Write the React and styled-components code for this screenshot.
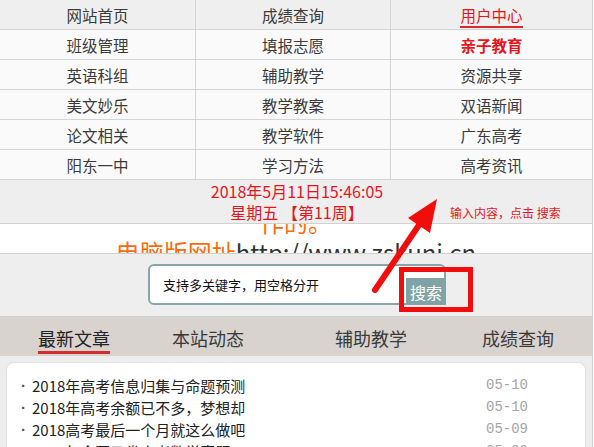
import React from "react";
import styled, { createGlobalStyle } from "styled-components";

const GlobalStyle = createGlobalStyle`
  body {
    margin: 0;
    background: #ffffff;
    font-family: "Noto Sans CJK SC", "Noto Sans", sans-serif;
  }
`;

const Page = styled.div`
  position: relative;
  width: 592px;
  border-right: 1px solid #cfcfcf;
  overflow: hidden;
`;

const NavGrid = styled.div`
  display: grid;
  grid-template-columns: 196px 195px 201px;
`;

const NavCell = styled.div`
  height: 29px;
  display: flex;
  align-items: center;
  justify-content: center;
  border-bottom: 1px solid #d4d4d4;
  border-right: ${(p) => (p.$last ? "none" : "1px solid #d4d4d4")};
  background: ${(p) => (p.$head ? "#efefef" : "#fafafa")};
  font-size: 15.5px;
  color: ${(p) => (p.$red ? "#e8141c" : "#3a3a3a")};
  font-weight: ${(p) => (p.$bold ? 700 : 400)};
`;

const ActiveLink = styled.span`
  line-height: 22px;
  border-bottom: 2px solid #d52c2c;
  margin-top: 2px;
`;

const DateBlock = styled.div`
  height: 43px;
  background: #eeeeee;
  display: flex;
  flex-direction: column;
  align-items: center;
  padding-left: 2px;
  color: #e8141c;
  font-size: 16px;
  line-height: 21px;
  box-sizing: border-box;
  padding-top: 1px;
`;

const Marquee = styled.div`
  height: 29px;
  background: #ffffff;
  border-top: 1px solid #d0d0d0;
  border-bottom: 1px solid #d0d0d0;
  overflow: hidden;
`;

const MarqueeInner = styled.div`
  margin-top: -17px;
  text-align: center;
  font-size: 24px;
  line-height: 30px;
  color: #ff6a0a;
`;

const UrlText = styled.span`
  color: #333333;
`;

const SearchArea = styled.div`
  height: 63px;
  background: #eeeeee;
  border-bottom: 1px solid #d0d0d0;
  display: flex;
  padding-left: 148px;
  padding-top: 10px;
  box-sizing: border-box;
`;

const SearchBox = styled.div`
  width: 298px;
  height: 41px;
  box-sizing: border-box;
  border: 2px solid #86a7ab;
  border-radius: 6px;
  background: #ffffff;
  display: flex;
  align-items: flex-end;
  justify-content: space-between;
`;

const SearchHint = styled.span`
  align-self: center;
  padding-left: 13px;
  font-size: 13px;
  color: #111111;
`;

const SearchButton = styled.button`
  width: 40px;
  height: 27px;
  margin: 0 -2px -2px 0;
  padding: 0;
  border: none;
  background: #7fa3a6;
  color: #ffffff;
  font-family: inherit;
  font-size: 16px;
`;

const TabBar = styled.div`
  height: 39px;
  background: #d9d3cf;
  display: flex;
  align-items: center;
  padding-left: 38px;
`;

const Tab = styled.div`
  margin-left: ${(p) => p.$gap || 0}px;
  font-size: 18px;
  color: ${(p) => (p.$active ? "#222222" : "#3a3a3a")};
  line-height: 25px;
  border-bottom: 3px solid ${(p) => (p.$active ? "#d52c2c" : "transparent")};
  margin-top: 6px;
`;

const ListArea = styled.div`
  background: #ededed;
  padding: 6px 6px 0 6px;
`;

const Card = styled.div`
  background: #ffffff;
  border: 1px solid #e2e2e2;
  border-bottom: none;
  border-radius: 8px 8px 0 0;
  padding: 11px 0 0 14px;
  height: 80px;
  overflow: hidden;
`;

const Item = styled.div`
  display: flex;
  align-items: center;
  height: 22px;
  font-size: 15px;
  color: #222222;
`;

const Bullet = styled.span`
  width: 11px;
  font-family: "Liberation Sans", sans-serif;
  font-weight: 700;
  color: #555555;
`;

const Title = styled.span`
  flex: 1;
`;

const ItemDate = styled.span`
  width: 42px;
  margin-right: 57px;
  font-family: "Liberation Mono", monospace;
  font-size: 14px;
  color: #a5a5a5;
`;

const Annotation = styled.svg`
  position: absolute;
  left: 0;
  top: 0;
  pointer-events: none;
`;

const AnnotationText = styled.div`
  position: absolute;
  left: 450px;
  top: 204px;
  font-size: 12px;
  color: #e8141c;
  white-space: nowrap;
`;

const HighlightBox = styled.div`
  position: absolute;
  left: 399px;
  top: 267px;
  width: 74px;
  height: 45px;
  box-sizing: border-box;
  border: 5px solid #f20d0d;
`;

const navRows = [
  ["网站首页", "成绩查询", "用户中心"],
  ["班级管理", "填报志愿", "亲子教育"],
  ["英语科组", "辅助教学", "资源共享"],
  ["美文妙乐", "教学教案", "双语新闻"],
  ["论文相关", "教学软件", "广东高考"],
  ["阳东一中", "学习方法", "高考资讯"],
];

const tabs = [
  { name: "最新文章", gap: 0, active: true },
  { name: "本站动态", gap: 62 },
  { name: "辅助教学", gap: 91 },
  { name: "成绩查询", gap: 75 },
];

const news = [
  ["2018年高考信息归集与命题预测", "05-10"],
  ["2018年高考余额已不多，梦想却", "05-10"],
  ["2018高考最后一个月就这么做吧", "05-09"],
  ["2018年全国乙卷高考数学真题", "05-09"],
];

export default function App() {
  return (
    <>
      <GlobalStyle />
      <Page>
        <NavGrid>
          {navRows.map((row, r) =>
            row.map((label, c) => (
              <NavCell
                key={label}
                $head={r === 0}
                $last={c === 2}
                $red={c === 2 && r < 2}
                $bold={r === 1 && c === 2}
              >
                {r === 0 && c === 2 ? <ActiveLink>{label}</ActiveLink> : label}
              </NavCell>
            ))
          )}
        </NavGrid>

        <DateBlock>
          <div>2018年5月11日15:46:05</div>
          <div>星期五 【第11周】</div>
        </DateBlock>

        <Marquee>
          <MarqueeInner>
            <div>作的。</div>
            <div>
              电脑版网址<UrlText>http://www.zskuni.cn</UrlText>
            </div>
          </MarqueeInner>
        </Marquee>

        <SearchArea>
          <SearchBox>
            <SearchHint>支持多关键字，用空格分开</SearchHint>
            <SearchButton>搜索</SearchButton>
          </SearchBox>
        </SearchArea>

        <TabBar>
          {tabs.map((t) => (
            <Tab key={t.name} $gap={t.gap} $active={t.active}>
              {t.name}
            </Tab>
          ))}
        </TabBar>

        <ListArea>
          <Card>
            {news.map(([title, date]) => (
              <Item key={title}>
                <Bullet>·</Bullet>
                <Title>{title}</Title>
                <ItemDate>{date}</ItemDate>
              </Item>
            ))}
          </Card>
        </ListArea>

        <AnnotationText>输入内容，点击 搜索</AnnotationText>
        <HighlightBox />
        <Annotation width="594" height="447">
          <line
            x1="375"
            y1="290"
            x2="419"
            y2="225"
            stroke="#f20d0d"
            strokeWidth="6"
            strokeLinecap="round"
          />
          <polygon points="437,199 430,233 408,218" fill="#f20d0d" />
        </Annotation>
      </Page>
    </>
  );
}
